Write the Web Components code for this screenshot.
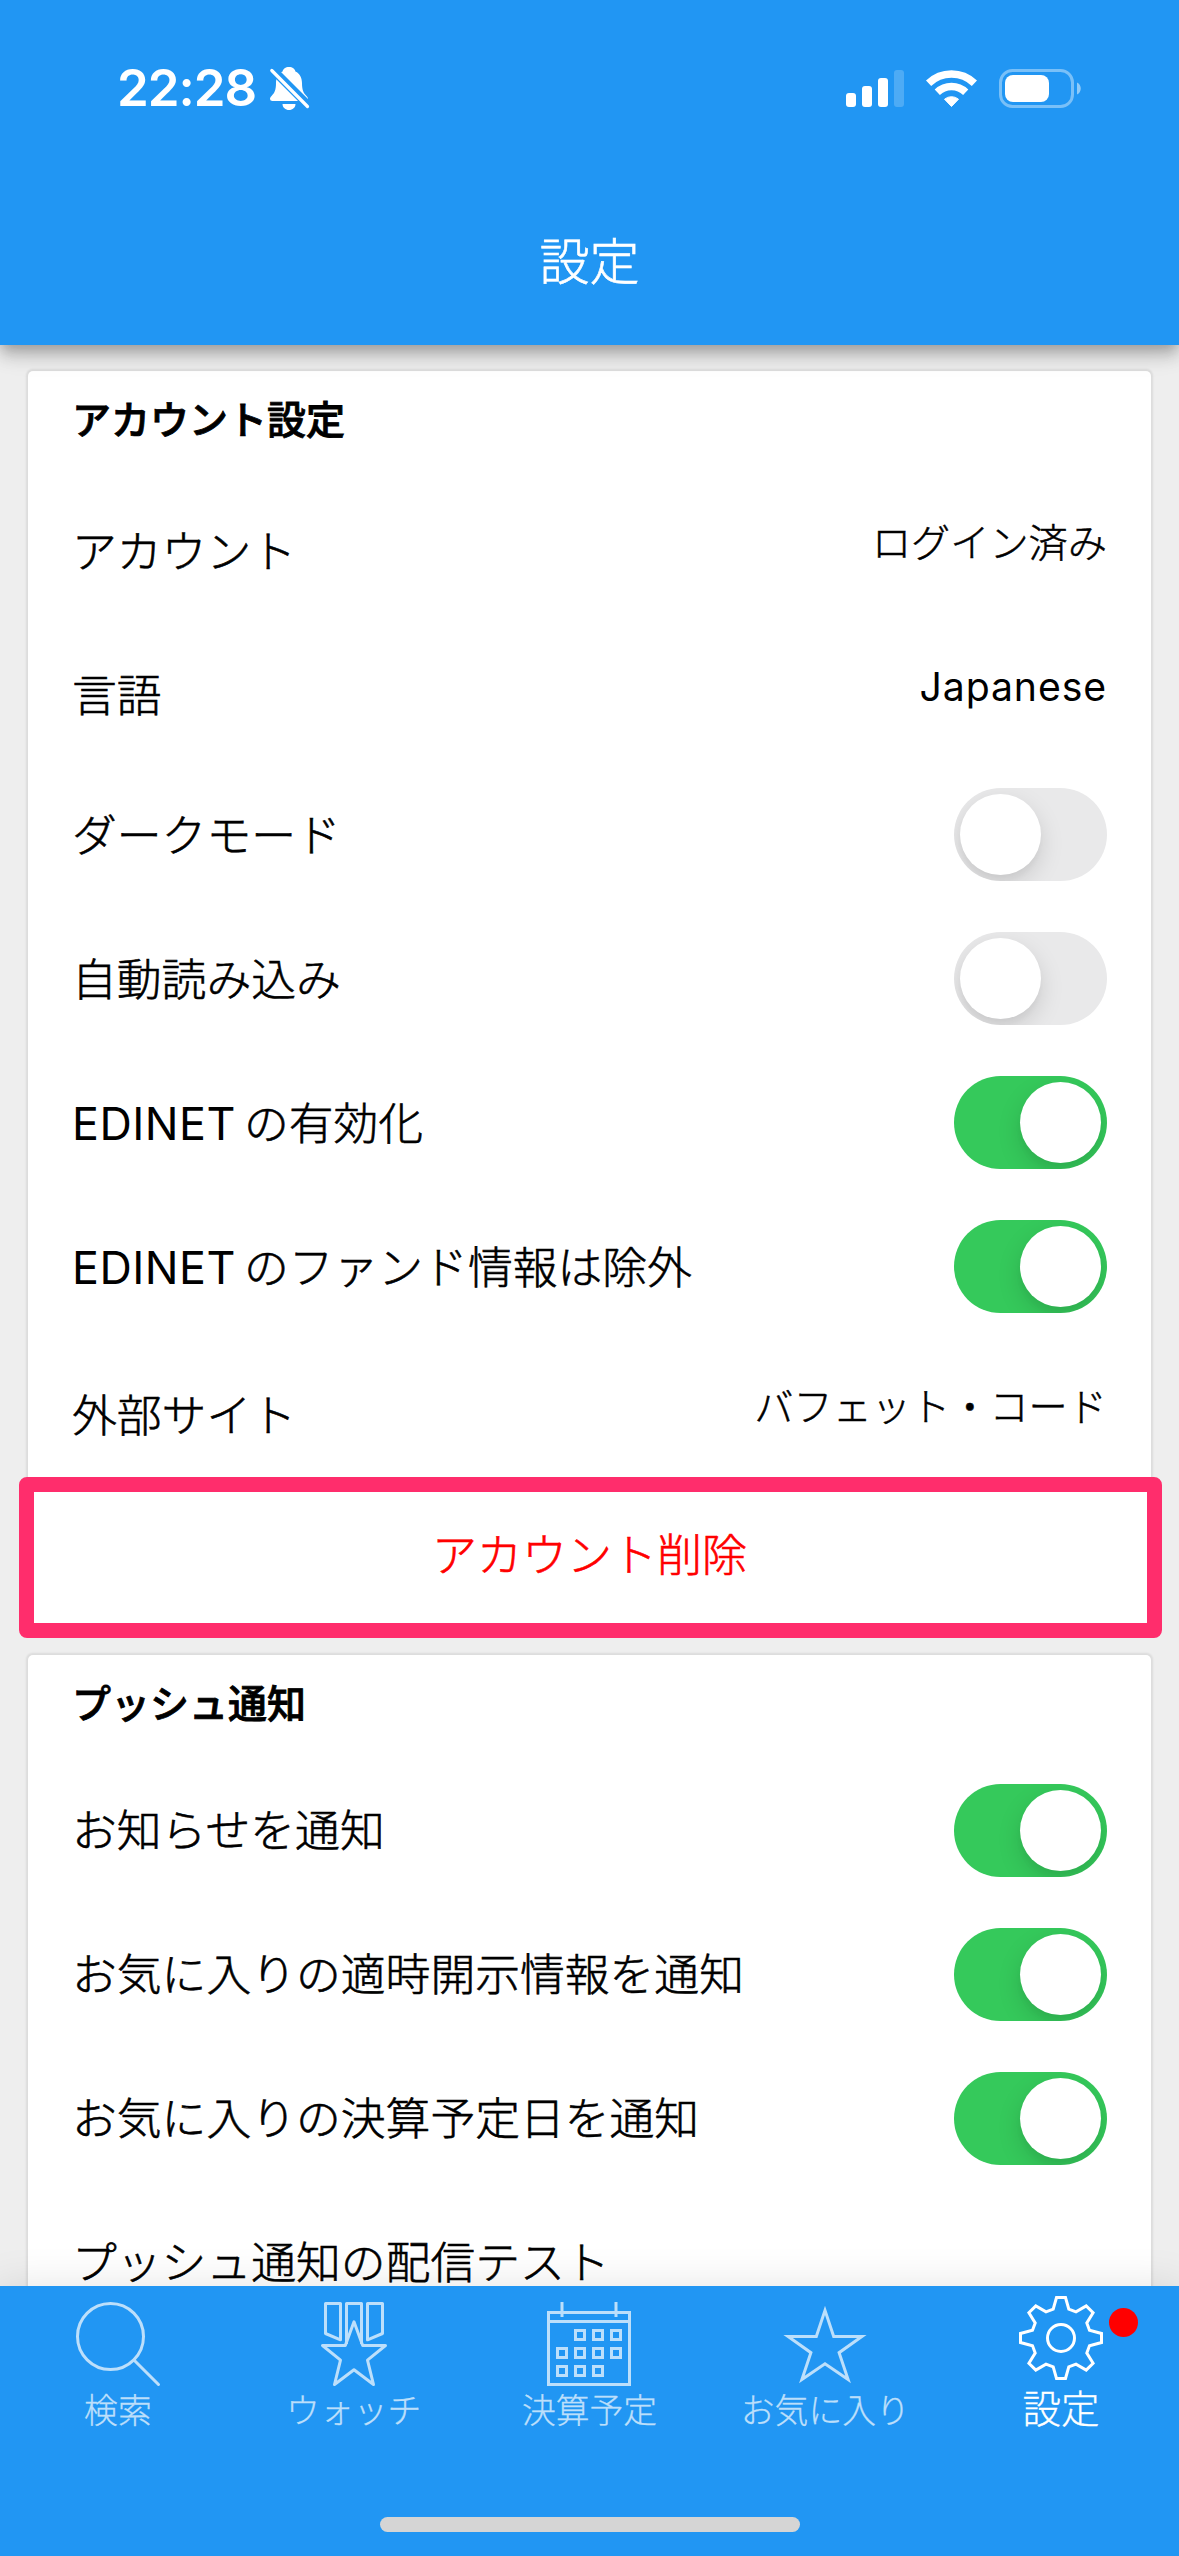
<!DOCTYPE html>
<html lang="ja">
  <head>
    <meta charset="UTF-8" />
    <meta name="viewport" content="width=device-width, initial-scale=1.0" />
    <title>設定</title>
    <style>
      body {
        margin: 0;
        background: #eee;
        color: #000;
        font-family: Inter, "Noto Sans CJK JP", sans-serif;
      }
    </style>
  </head>
  <body>
    <app-shell>
      <app-header slot="header" time="22:28">設定</app-header>

      <settings-card heading="アカウント設定">
        <settings-row value="ログイン済み">アカウント</settings-row>
        <settings-row value="Japanese">言語</settings-row>
        <settings-row>ダークモード<toggle-switch slot="control"></toggle-switch></settings-row>
        <settings-row>自動読み込み<toggle-switch slot="control"></toggle-switch></settings-row>
        <settings-row prefix="EDINET">の有効化<toggle-switch slot="control" checked></toggle-switch></settings-row>
        <settings-row prefix="EDINET">のファンド情報は除外<toggle-switch slot="control" checked></toggle-switch></settings-row>
        <settings-row value="バフェット・コード">外部サイト</settings-row>
        <danger-row>アカウント削除</danger-row>
      </settings-card>

      <settings-card heading="プッシュ通知">
        <settings-row>お知らせを通知<toggle-switch slot="control" checked></toggle-switch></settings-row>
        <settings-row>お気に入りの適時開示情報を通知<toggle-switch slot="control" checked></toggle-switch></settings-row>
        <settings-row>お気に入りの決算予定日を通知<toggle-switch slot="control" checked></toggle-switch></settings-row>
        <settings-row>プッシュ通知の配信テスト</settings-row>
      </settings-card>

      <tab-bar slot="footer">
        <tab-item icon="search">検索</tab-item>
        <tab-item icon="medal">ウォッチ</tab-item>
        <tab-item icon="calendar">決算予定</tab-item>
        <tab-item icon="star">お気に入り</tab-item>
        <tab-item icon="gear" selected badge>設定</tab-item>
      </tab-bar>
    </app-shell>
  </body>
  <script>
    // テンプレートからshadow DOMを作る共通の基底クラス
    class BaseElement extends HTMLElement {
      constructor() {
        super();
        this.attachShadow({ mode: "open" });
        const template = document.createElement("template");
        template.innerHTML = this.constructor.html;
        this.shadowRoot.append(template.content.cloneNode(true));
      }
      $(selector) {
        return this.shadowRoot.querySelector(selector);
      }
    }

    // 画面全体（ヘッダー / 本文 / タブバー）
    class AppShell extends BaseElement {
      static html = `
        <style>
          :host {
            display: flex;
            flex-direction: column;
            height: 2556px;
            overflow: hidden;
            background: #eee;
          }
          main {
            flex: 1;
            min-height: 0;
            display: flex;
            flex-direction: column;
            gap: 32px;
            padding: 26px 28px 0;
          }
          ::slotted([slot]) { flex: none; z-index: 1; }
        </style>
        <slot name="header"></slot>
        <main><slot></slot></main>
        <slot name="footer"></slot>
      `;
    }

    // ステータスバーとタイトル
    class AppHeader extends BaseElement {
      static html = `
        <style>
          :host {
            display: flex;
            flex-direction: column;
            height: 345px;
            position: relative;
            background: #2196f3;
            color: #fff;
            box-shadow: 0 6px 12px -3px rgba(0,0,0,.2), 0 12px 15px rgba(0,0,0,.14), 0 3px 30px rgba(0,0,0,.12);
          }
          .status {
            display: flex;
            align-items: center;
            height: 176px;
            padding: 0 98px 0 117px;
          }
          #time {
            font-size: 51px;
            font-weight: 600;
            line-height: 60px;
            letter-spacing: -1px;
          }
          .bell { margin-left: 14px; }
          .signal { margin-left: auto; }
          .wifi { margin-left: 22px; }
          .battery { margin-left: 22px; }
          svg { display: block; overflow: visible; }
          h1 {
            flex: 1;
            margin: 0;
            padding-top: 3px;
            display: flex;
            align-items: center;
            justify-content: center;
            font-size: 50px;
            font-weight: 300;
            line-height: 60px;
            -webkit-text-stroke: .6px;
          }
        </style>
        <div class="status">
          <span id="time"></span>
          <svg class="bell" width="39" height="43" fill="#fff">
            <mask id="cut">
              <rect x="-2" y="-2" width="44" height="48" fill="#fff" />
              <path d="M-3 -2L43 44" transform="translate(1 0)" stroke="#000" stroke-width="8.5" />
            </mask>
            <path mask="url(#cut)" d="M19 0C15.500 0 13 2 12.600 4.500C8 6.500 6 11 6 16C6 23 4.500 26 1.500 29C0 30.500 0 31.500 0 32Q0 34 2.500 34H35.500Q38 34 38 32C38 31.500 38 30.500 36.500 29C33.500 26 32 23 32 16C32 11 30 6.500 25.400 4.500C25 2 22.500 0 19 0Z" />
            <path d="M12.500 37h13c0 3.500-3 6-6.500 6s-6.500-2.500-6.500-6z" />
            <path d="M1.800 3.500L37.500 39.500" stroke="#fff" stroke-width="3.200" stroke-linecap="round" />
          </svg>
          <svg class="signal" width="58" height="37" fill="#fff">
            <rect y="23" width="10" height="14" rx="3" />
            <rect x="16" y="16" width="10" height="21" rx="3" />
            <rect x="32" y="8" width="10" height="29" rx="3" />
            <rect x="48" width="10" height="37" rx="3" opacity=".2" />
          </svg>
          <svg class="wifi" width="51" height="37" fill="none" stroke="#fff" stroke-width="7.500">
            <path d="M2.600 13.300A33 33 0 0 1 48.400 13.300" />
            <path d="M11.300 22.300A20.500 20.500 0 0 1 39.700 22.300" />
            <path d="M18.500 29.200A11 11 0 0 1 32.500 29.200L25.500 36.500Z" fill="#fff" stroke-width="1" stroke-linejoin="round" />
          </svg>
          <svg class="battery" width="82" height="39">
            <rect x="1.500" y="1.500" width="72" height="36" rx="12" fill="none" stroke="#fff" stroke-width="3" opacity=".4" />
            <rect x="6" y="6" width="44" height="27" rx="8" fill="#fff" />
            <path d="M78 13.500c5 2 5 10 0 12z" fill="#fff" opacity=".5" />
          </svg>
        </div>
        <h1><slot></slot></h1>
      `;
      connectedCallback() {
        this.$("#time").textContent = this.getAttribute("time");
      }
    }

    // 見出し付きのカード
    class SettingsCard extends BaseElement {
      static html = `
        <style>
          :host {
            display: block;
            flex: none;
            background: #fff;
            border-radius: 5px;
            box-shadow: 0 0 2px 1.500px rgba(0,0,0,.08);
          }
          h2 {
            display: flex;
            align-items: center;
            height: 98px;
            margin: 0;
            padding: 0 44px 5.500px;
            font-size: 39px;
            font-weight: 500;
            line-height: 60px;
            -webkit-text-stroke: .8px;
          }
        </style>
        <h2></h2>
        <slot></slot>
      `;
      connectedCallback() {
        this.$("h2").textContent = this.getAttribute("heading");
      }
    }

    // 設定の1行。valueがあれば右側に値を表示する
    class SettingsRow extends BaseElement {
      static html = `
        <style>
          :host {
            display: flex;
            align-items: center;
            justify-content: space-between;
            box-sizing: border-box;
            height: 144px;
            padding: 0 44px 0 44px;
            white-space: nowrap;
          }
          .label {
            padding-top: 2px;
            font-size: 44.800px;
            font-weight: 300;
            line-height: 60px;
            -webkit-text-stroke: .6px;
          }
          :host([value]) .label { padding-top: 10px; }
          #prefix {
            font-weight: 400;
            letter-spacing: .5px;
            margin-right: 8px;
            -webkit-text-stroke: 0;
          }
          #prefix:empty { display: none; }
          #value {
            font-size: 39.200px;
            font-weight: 300;
            line-height: 52px;
            padding-bottom: 7px;
            -webkit-text-stroke: .5px;
          }
          #value.latin {
            font-weight: 400;
            letter-spacing: .9px;
            -webkit-text-stroke: 0;
          }
          #value:empty { display: none; }
        </style>
        <span class="label"><span id="prefix"></span><slot></slot></span>
        <span id="value"></span>
        <slot name="control"></slot>
      `;
      connectedCallback() {
        const value = this.getAttribute("value") || "";
        this.$("#prefix").textContent = this.getAttribute("prefix") || "";
        this.$("#value").textContent = value;
        this.$("#value").classList.toggle("latin", /^[\x20-\x7e]+$/.test(value));
      }
    }

    // 削除などの危険な操作の行。枠で強調する
    class DangerRow extends BaseElement {
      static html = `
        <style>
          :host {
            display: flex;
            align-items: center;
            justify-content: center;
            box-sizing: border-box;
            position: relative;
            height: 140px;
            padding-top: 6px;
            color: #f00;
            font-size: 45px;
            font-weight: 300;
            line-height: 60px;
            -webkit-text-stroke: .6px;
          }
          .frame {
            position: absolute;
            inset: -6px -11px -15px -9px;
            border: 15px solid #ff2d6c;
            border-radius: 8px;
          }
        </style>
        <slot></slot>
        <div class="frame"></div>
      `;
    }

    // iOS風のスイッチ
    class ToggleSwitch extends BaseElement {
      static html = `
        <style>
          :host {
            display: flex;
            box-sizing: border-box;
            width: 153px;
            height: 93px;
            padding: 6px;
            border-radius: 47px;
            overflow: hidden;
            background: #e9e9ea;
          }
          :host([checked]) {
            justify-content: flex-end;
            background: #35c95b;
          }
          span {
            width: 81px;
            height: 81px;
            border-radius: 50%;
            background: #fff;
            box-shadow: 0 9px 24px rgba(0,0,0,.13), 0 6px 6px rgba(0,0,0,.03);
          }
        </style>
        <span></span>
      `;
      connectedCallback() {
        this.onclick = () => this.toggleAttribute("checked");
      }
    }

    // 下部のタブバー
    class TabBar extends BaseElement {
      static html = `
        <style>
          :host {
            display: flex;
            flex-direction: column;
            justify-content: space-between;
            box-sizing: border-box;
            height: 270px;
            padding-bottom: 24px;
            position: relative;
            background: #2196f3;
            box-shadow: 0 9px 42px 6px rgba(0,0,0,.12);
          }
          nav { display: grid; grid-template-columns: repeat(5, 1fr); }
          .home {
            align-self: center;
            width: 420px;
            height: 15px;
            border-radius: 8px;
            background: #d5d5d5;
          }
        </style>
        <nav><slot></slot></nav>
        <div class="home"></div>
      `;
    }

    // 28x28グリッドのアイコン
    const days = [
      [9.5, 9.5], [15.5, 9.5], [21.5, 9.5],
      [3.5, 15.5], [9.5, 15.5], [15.5, 15.5], [21.5, 15.5],
      [3.5, 21.5], [9.5, 21.5], [15.5, 21.5],
    ];
    const icons = {
      search: `<circle cx="11.500" cy="11.500" r="11" /><path d="M19.400 19.400L27.500 27.500" stroke-linecap="round" />`,
      medal: `<g stroke-linejoin="round">
        <path d="M4.500 .500h5v12.100l-5-2.100zM18.500 12.600V.500h5v10zM11.500 14V.500h5V14" />
        <path d="M14 6.600L16.900 14.500H24.500L18.500 19.400L20.500 27.500L14 22.600L7.500 27.500L9.500 19.400L3.500 14.500H11.100Z" />
      </g>`,
      calendar: `<path d="M.5 3.500h27v24H.5zM.5 6.500h27M5 0v5M23 0v5" />` +
        days.map(([x, y]) => `<rect x="${x}" y="${y}" width="3" height="3" />`).join(""),
      star: `<path stroke-miterlimit="10" d="M14 2.800L16.900 11.500H26.300L18.700 16.900L21.700 25.800L14 20.600L6.300 25.800L9.300 16.900L1.700 11.500H11.100Z" />`,
      gear: `<circle cx="14" cy="14" r="4.500" />
        <path d="M12.500 .500h3l1.100 3.900L19 5.300l3.400-2L24.700 5.600 22.600 9l.9 2.400 4 1.100v3l-4 1.100-.9 2.400 2.100 3.400-2.300 2.300-3.400-2-2.400.9-1.100 3.900h-3l-1.100-3.900L9 22.700l-3.400 2L3.300 22.400 5.400 19l-.9-2.400-4-1.100v-3l4-1.100L5.400 9 3.300 5.600 5.600 3.300l3.400 2 2.400-.9z" />`,
    };

    class TabItem extends BaseElement {
      static html = `
        <style>
          :host {
            display: flex;
            flex-direction: column;
            align-items: center;
            position: relative;
            padding-top: 16px;
            color: #bcdffb;
            font-size: 33.800px;
            font-weight: 300;
            line-height: 50px;
            white-space: nowrap;
            -webkit-text-stroke: .3px;
          }
          :host([selected]) {
            padding-top: 10px;
            color: #fff;
            font-size: 38.500px;
            line-height: 58px;
          }
          svg { display: block; overflow: visible; }
          .badge { display: none; }
          :host([badge]) .badge {
            display: block;
            position: absolute;
            left: calc(50% + 48px);
            top: 22px;
            width: 29px;
            height: 29px;
            border-radius: 50%;
            background: #f00;
          }
        </style>
        <svg width="84" height="84" viewBox="0 0 28 28" fill="none" stroke="currentColor"></svg>
        <slot></slot>
        <span class="badge"></span>
      `;
      connectedCallback() {
        this.$("svg").innerHTML = icons[this.getAttribute("icon")];
      }
    }

    customElements.define("app-shell", AppShell);
    customElements.define("app-header", AppHeader);
    customElements.define("settings-card", SettingsCard);
    customElements.define("settings-row", SettingsRow);
    customElements.define("danger-row", DangerRow);
    customElements.define("toggle-switch", ToggleSwitch);
    customElements.define("tab-bar", TabBar);
    customElements.define("tab-item", TabItem);
  </script>
</html>
